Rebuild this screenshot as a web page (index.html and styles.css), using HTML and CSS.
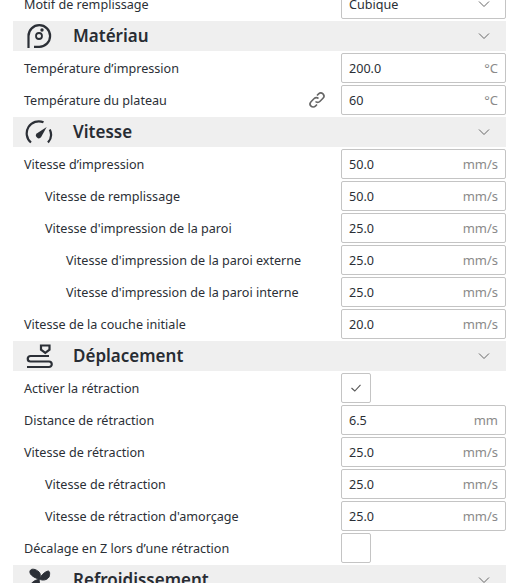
FILE: index.html
```html
<!DOCTYPE html>
<html lang="fr">
<head>
<meta charset="utf-8">
<title>Paramètres d'impression</title>
<link rel="stylesheet" href="styles.css">
</head>
<body>
<main class="panel">
  <div class="row"><span class="label">Motif de remplissage</span>
    <div class="field select"><span class="value">Cubique</span>
      <svg class="chev" viewBox="0 0 12 8"><path d="M1 1.5 6 6.5 11 1.5"/></svg></div></div>

  <div class="section"><svg class="icon" viewBox="0 0 30 30"><path class="st" d="M4.500 27V15a10.800 10.800 0 1 1 10.800 10.800H10"/><circle class="st thin" cx="15" cy="15" r="3"/><circle class="fl" cx="18" cy="9" r="1.700"/></svg><h2 class="title">Matériau</h2>
    <svg class="chev" viewBox="0 0 12 8"><path d="M1 1.5 6 6.5 11 1.5"/></svg></div>
  <div class="row"><span class="label">Température d’impression</span>
    <div class="field"><span class="value">200.0</span><span class="unit">°C</span></div></div>
  <div class="row"><span class="label">Température du plateau</span>
    <svg class="link" viewBox="0 0 20 20"><path d="M8.500 11.500a3 3 0 0 0 4.300 0l3.200-3.200a3.100 3.100 0 0 0-4.400-4.400L10 5.500"/><path d="M11.500 8.500a3 3 0 0 0-4.300 0L4 11.700a3.100 3.100 0 0 0 4.400 4.400l1.600-1.600"/></svg>
    <div class="field"><span class="value">60</span><span class="unit">°C</span></div></div>

  <div class="section"><svg class="icon" viewBox="0 0 30 30"><path class="st" d="M7 25.500A12 12 0 0 1 19.500 5.300M25.800 12.500A12 12 0 0 1 24 25.500"/><path class="fl" d="M12.700 16.500 22.700 10 17 20.300a2.700 2.700 0 0 1-4.300-3.800Z"/></svg><h2 class="title">Vitesse</h2>
    <svg class="chev" viewBox="0 0 12 8"><path d="M1 1.5 6 6.5 11 1.5"/></svg></div>
  <div class="row"><span class="label">Vitesse d’impression</span>
    <div class="field"><span class="value">50.0</span><span class="unit">mm/s</span></div></div>
  <div class="row"><span class="label indent1">Vitesse de remplissage</span>
    <div class="field"><span class="value">50.0</span><span class="unit">mm/s</span></div></div>
  <div class="row"><span class="label indent1">Vitesse d'impression de la paroi</span>
    <div class="field"><span class="value">25.0</span><span class="unit">mm/s</span></div></div>
  <div class="row"><span class="label indent2">Vitesse d'impression de la paroi externe</span>
    <div class="field"><span class="value">25.0</span><span class="unit">mm/s</span></div></div>
  <div class="row"><span class="label indent2">Vitesse d'impression de la paroi interne</span>
    <div class="field"><span class="value">25.0</span><span class="unit">mm/s</span></div></div>
  <div class="row"><span class="label">Vitesse de la couche initiale</span>
    <div class="field"><span class="value">20.0</span><span class="unit">mm/s</span></div></div>

  <div class="section"><svg class="icon" viewBox="0 0 30 30"><path class="st" d="M17 4.500h8.500v4.200l-4.200 3.200-4.300-3.200Z"/><path class="st" d="M25 15H6.500a2.600 2.600 0 0 0 0 5.500H25a2.700 2.700 0 0 1 0 5.500H3"/></svg><h2 class="title">Déplacement</h2>
    <svg class="chev" viewBox="0 0 12 8"><path d="M1 1.5 6 6.5 11 1.5"/></svg></div>
  <div class="row"><span class="label">Activer la rétraction</span>
    <div class="check"><svg class="tick" viewBox="0 0 10 8"><path d="M.5 4 3.800 7 9.500 .8"/></svg></div><div class="spacer"></div></div>
  <div class="row"><span class="label">Distance de rétraction</span>
    <div class="field"><span class="value">6.5</span><span class="unit">mm</span></div></div>
  <div class="row"><span class="label">Vitesse de rétraction</span>
    <div class="field"><span class="value">25.0</span><span class="unit">mm/s</span></div></div>
  <div class="row"><span class="label indent1">Vitesse de rétraction</span>
    <div class="field"><span class="value">25.0</span><span class="unit">mm/s</span></div></div>
  <div class="row"><span class="label indent1">Vitesse de rétraction d'amorçage</span>
    <div class="field"><span class="value">25.0</span><span class="unit">mm/s</span></div></div>
  <div class="row"><span class="label">Décalage en Z lors d’une rétraction</span>
    <div class="check"></div><div class="spacer"></div></div>

  <div class="section"><svg class="icon" viewBox="0 0 30 30"><path class="fan" d="M15 14C11 13 5 10 6 6 7 3 12 4 15 7 17 9 16.500 12 15 14ZM15 14c2-3 5-7 9-8 2 0 2 3 1 6-2 3-6 4-10 2ZM15 14c-3 1-8 3-9 7-.5 3 3 4 6 2 3-2 4-5 3-9Z"/></svg><h2 class="title">Refroidissement</h2>
    <svg class="chev" viewBox="0 0 12 8"><path d="M1 1.5 6 6.5 11 1.500"/></svg></div>
</main>
</body>
</html>
```
FILE: styles.css
```css
html, body {
  margin: 0;
  padding: 0;
  height: 583px;
  overflow: hidden;
  background: #fff;
}
.panel {
  width: 493px;
  margin: -12px 0 0 13px;
  font-family: "Noto Sans", sans-serif;
  font-size: 12.6px;
  color: #2b2f36;
}
.row {
  display: flex;
  align-items: center;
  height: 32px;
  box-sizing: border-box;
  padding: 1px 0;
}
.label {
  flex: 1;
  padding-left: 11px;
  white-space: nowrap;
}
.indent1 { padding-left: 32px; }
.indent2 { padding-left: 53px; }
.field {
  width: 165px;
  height: 30px;
  box-sizing: border-box;
  border: 1px solid #c4c4c4;
  border-radius: 2px;
  padding: 0 7px;
  display: flex;
  align-items: center;
  justify-content: space-between;
  background: #fff;
}
.unit { color: #8a8a8a; font-size: 13px; }
.check {
  width: 30px;
  height: 30px;
  box-sizing: border-box;
  border: 1px solid #c4c4c4;
  border-radius: 2px;
  display: flex;
  align-items: center;
  justify-content: center;
}
.spacer { width: 135px; }
.tick { width: 10px; height: 8px; fill: none; stroke: #555; stroke-width: 1.100; }
.section {
  display: flex;
  align-items: center;
  height: 30px;
  margin: 1px 0;
  background: #efefef;
  padding: 0 16px 0 11px;
}
.icon { width: 30px; height: 30px; flex: none; }
.st { fill: none; stroke: #2b2f36; stroke-width: 2.200; }
.thin { stroke-width: 1.800; }
.fl { fill: #2b2f36; }
.fan { fill: #2b2f36; stroke: #2b2f36; stroke-width: 1; }
.title {
  flex: 1;
  margin: 0 0 2px 19px;
  font-size: 17px;
  font-weight: 600;
  color: #282c33;
}
.chev {
  width: 12px;
  height: 8px;
  fill: none;
  stroke: #666;
  stroke-width: 1;
  flex: none;
}
.select .chev { margin-right: 8px; }
.link {
  width: 20px;
  height: 20px;
  margin-right: 14px;
  fill: none;
  stroke: #666;
  stroke-width: 1.600;
  flex: none;
}
```
